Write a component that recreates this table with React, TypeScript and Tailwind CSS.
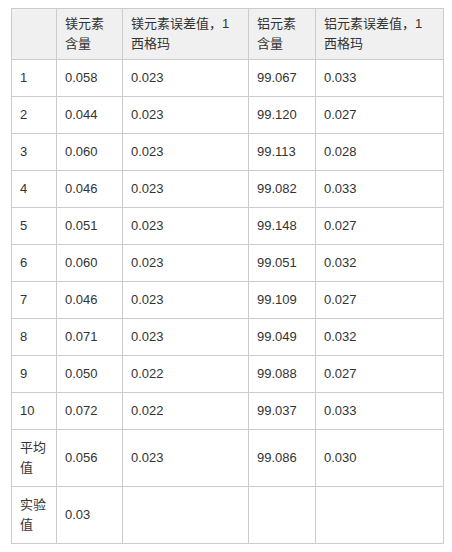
import React from "react";

const rows: string[][] = [
  ["1", "0.058", "0.023", "99.067", "0.033"],
  ["2", "0.044", "0.023", "99.120", "0.027"],
  ["3", "0.060", "0.023", "99.113", "0.028"],
  ["4", "0.046", "0.023", "99.082", "0.033"],
  ["5", "0.051", "0.023", "99.148", "0.027"],
  ["6", "0.060", "0.023", "99.051", "0.032"],
  ["7", "0.046", "0.023", "99.109", "0.027"],
  ["8", "0.071", "0.023", "99.049", "0.032"],
  ["9", "0.050", "0.022", "99.088", "0.027"],
  ["10", "0.072", "0.022", "99.037", "0.033"],
];

const td = "border border-[#cccccc] px-[8px] py-[8px] align-middle";
const th = "border border-[#cccccc] px-[8px] py-[5px] align-middle text-left font-normal";

export default function App() {
  return (
    <div
      className="w-[452px] h-[552px] bg-white pl-[11px] pt-[8px] text-[#333333] text-[13px] leading-[20px]"
      style={{ fontFamily: '"Liberation Sans", Arial, "Noto Sans CJK SC", sans-serif' }}
    >
      <table className="table-fixed border-collapse w-[433px]">
        <colgroup>
          <col className="w-[45px]" />
          <col className="w-[66px]" />
          <col className="w-[126px]" />
          <col className="w-[67px]" />
          <col className="w-[128px]" />
        </colgroup>
        <thead>
          <tr className="bg-[#f0f0f0]">
            <th className={th}></th>
            <th className={th}>
              镁元素
              <br />
              含量
            </th>
            <th className={th}>
              镁元素误差值，1
              <br />
              西格玛
            </th>
            <th className={th}>
              铝元素
              <br />
              含量
            </th>
            <th className={th}>
              铝元素误差值，1
              <br />
              西格玛
            </th>
          </tr>
        </thead>
        <tbody>
          {rows.map((r) => (
            <tr key={r[0]}>
              {r.map((c, i) => (
                <td key={i} className={td}>
                  {c}
                </td>
              ))}
            </tr>
          ))}
          <tr>
            <td className={td}>
              平均
              <br />
              值
            </td>
            <td className={td}>0.056</td>
            <td className={td}>0.023</td>
            <td className={td}>99.086</td>
            <td className={td}>0.030</td>
          </tr>
          <tr>
            <td className={td}>
              实验
              <br />
              值
            </td>
            <td className={td}>0.03</td>
            <td className={td}></td>
            <td className={td}></td>
            <td className={td}></td>
          </tr>
        </tbody>
      </table>
    </div>
  );
}
